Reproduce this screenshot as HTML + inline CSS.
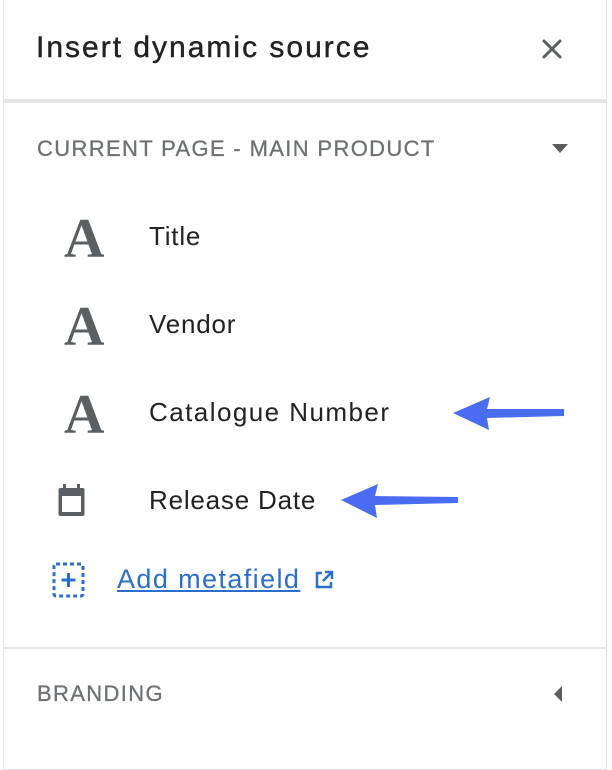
<!DOCTYPE html>
<html><head><style>
body{margin:0;width:612px;height:754px;background:#fff;font-family:"Liberation Sans",sans-serif;position:relative;overflow:hidden}
.panel{position:absolute;left:3px;top:-2px;width:602px;height:770px;border:1px solid #e1e3e5;border-radius:0}
.abs{position:absolute;white-space:nowrap}
.hd{left:36px;top:31px;font-size:30px;color:#202223;letter-spacing:2px;-webkit-text-stroke:0.4px #202223}
.sec{left:37px;font-size:22px;color:#6d7175;letter-spacing:1.35px;-webkit-text-stroke:0.3px #6d7175}
.item{left:149px;font-size:26px;color:#202223;letter-spacing:0.8px}
.A{left:64px;font-family:"Liberation Serif",serif;font-weight:bold;font-size:56px;color:#5c5f62;line-height:1}
</style></head><body>
<div class="panel"></div>
<div class="abs hd">Insert dynamic source</div>
<svg class="abs" style="left:540px;top:37px" width="24" height="24"><path d="M4 4L20 20M20 4L4 20" stroke="#5c5f62" stroke-width="3" stroke-linecap="round"/></svg>
<div class="abs" style="left:4px;top:99px;width:602px;height:4px;background:#e4e5e7"></div>
<div class="abs sec" style="top:136px">CURRENT PAGE - MAIN PRODUCT</div>
<svg class="abs" style="left:551px;top:143px" width="18" height="12"><path d="M1 1H17L9 10Z" fill="#5c5f62"/></svg>
<div class="abs A" style="top:211px">A</div><div class="abs item" style="top:221px">Title</div>
<div class="abs A" style="top:299px">A</div><div class="abs item" style="top:309px">Vendor</div>
<div class="abs A" style="top:387px">A</div><div class="abs item" style="top:397px;letter-spacing:1.45px">Catalogue Number</div>
<svg class="abs" style="left:57px;top:484px" width="30" height="34"><rect x="1.5" y="4" width="26" height="28" rx="2" fill="#5c5f62"/><rect x="5" y="12" width="19" height="16" fill="#fff"/><rect x="6" y="0" width="3" height="6" fill="#5c5f62"/><rect x="20" y="0" width="3" height="6" fill="#5c5f62"/></svg>
<div class="abs item" style="top:485px">Release Date</div>
<svg class="abs" style="left:52px;top:562px" width="34" height="36"><rect x="2" y="2" width="29" height="32" rx="2" fill="none" stroke="#2c6ecb" stroke-width="3" stroke-dasharray="4 3"/><path d="M16.5 11V25M9.5 18H23.5" stroke="#2c6ecb" stroke-width="3"/></svg>
<div class="abs" style="left:117px;top:564px;font-size:27px;color:#2c6ecb;text-decoration:underline;letter-spacing:1.4px">Add metafield</div>
<svg class="abs" style="left:314px;top:570px" width="20" height="20"><path d="M8 3H3V17H17V12" fill="none" stroke="#2c6ecb" stroke-width="2.5"/><path d="M11 2H18V9M18 2L9 11" fill="none" stroke="#2c6ecb" stroke-width="2.5"/></svg>
<div class="abs" style="left:4px;top:647px;width:602px;height:2px;background:#e4e5e7"></div>
<div class="abs sec" style="top:681px">BRANDING</div>
<svg class="abs" style="left:552px;top:685px" width="12" height="18"><path d="M10 1V17L2 9Z" fill="#5c5f62"/></svg>
<svg class="abs" style="left:0;top:0" width="612" height="754"><path d="M453 413L490 397L487 409L564 409L564 416L487 418L489 430Z" fill="#4a6cf0"/><path d="M341 500L378 484L375 496L458 497L458 503L375 505L377 518Z" fill="#4a6cf0"/></svg>
</body></html>
